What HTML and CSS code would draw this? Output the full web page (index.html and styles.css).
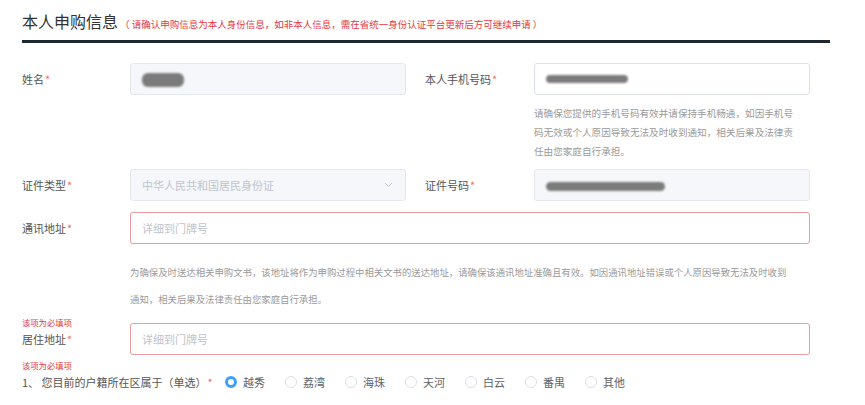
FILE: index.html
```html
<!DOCTYPE html>
<html lang="zh-CN">
<head>
<meta charset="utf-8">
<title>本人申购信息</title>
<link rel="stylesheet" href="styles.css">
</head>
<body>
<div class="page">
  <div class="head">
    <h2 class="title">本人申购信息</h2>
    <span class="note">（ 请确认申购信息为本人身份信息，如非本人信息，需在省统一身份认证平台更新后方可继续申请 ）</span>
  </div>
  <div class="rule"></div>

  <div class="row row-1">
    <div class="label">姓名<span class="star">*</span></div>
    <div class="field">
      <div class="input disabled"><span class="blob blob-name"></span></div>
    </div>
    <div class="label label-right">本人手机号码<span class="star">*</span></div>
    <div class="field">
      <div class="input"><span class="blob blob-phone"></span></div>
      <p class="help help-phone">请确保您提供的手机号码有效并请保持手机畅通，如因手机号码无效或个人原因导致无法及时收到通知，相关后果及法律责任由您家庭自行承担。</p>
    </div>
  </div>

  <div class="row row-2">
    <div class="label">证件类型<span class="star">*</span></div>
    <div class="field">
      <div class="input disabled select">
        <span class="ph">中华人民共和国居民身份证</span>
        <svg class="chev" width="9" height="6" viewBox="0 0 9 6"><path d="M1 1 L4.5 4.5 L8 1" fill="none" stroke="#c0c4cc" stroke-width="1"/></svg>
      </div>
    </div>
    <div class="label label-right">证件号码<span class="star">*</span></div>
    <div class="field">
      <div class="input disabled"><span class="blob blob-id"></span></div>
    </div>
  </div>

  <div class="row row-3">
    <div class="label">通讯地址<span class="star">*</span></div>
    <div class="field wide">
      <div class="input error"><span class="ph">详细到门牌号</span></div>
      <p class="help help-addr">为确保及时送达相关申购文书，该地址将作为申购过程中相关文书的送达地址，请确保该通讯地址准确且有效。如因通讯地址错误或个人原因导致无法及时收到通知，相关后果及法律责任由您家庭自行承担。</p>
    </div>
  </div>

  <div class="row row-4">
    <div class="label has-tip"><span class="tip">该项为必填项</span>居住地址<span class="star">*</span></div>
    <div class="field wide">
      <div class="input error"><span class="ph">详细到门牌号</span></div>
    </div>
  </div>

  <div class="question">
    <span class="tip tip-q">该项为必填项</span>
    <span class="q-text">1、 您目前的户籍所在区属于（单选）<span class="star">*</span></span>
    <div class="radios">
      <span class="radio checked"><i class="dot"></i>越秀</span>
      <span class="radio"><i class="dot"></i>荔湾</span>
      <span class="radio"><i class="dot"></i>海珠</span>
      <span class="radio"><i class="dot"></i>天河</span>
      <span class="radio"><i class="dot"></i>白云</span>
      <span class="radio"><i class="dot"></i>番禺</span>
      <span class="radio"><i class="dot"></i>其他</span>
    </div>
  </div>
</div>
</body>
</html>
```
FILE: styles.css
```css
* { box-sizing: border-box; }
html, body { margin: 0; padding: 0; background: #fff; }
body {
  font-family: "Noto Sans CJK SC", "Noto Sans", sans-serif;
  color: #555;
  font-size: 11px;
}
.page {
  width: 830px;
  padding-left: 22px;
}
.head {
  display: flex;
  align-items: baseline;
  padding-top: 9px;
  height: 39px;
}
.title {
  margin: 0;
  font-size: 16px;
  font-weight: normal;
  line-height: 24px;
  color: #333;
}
.note {
  font-size: 9.5px;
  color: #e4393c;
  margin-left: 2px;
  white-space: nowrap;
}
.rule {
  height: 3px;
  background: #1e2833;
  margin-top: 1px;
}
.row {
  display: grid;
  grid-template-columns: 108px 276px 128px 276px;
  align-items: start;
}
.row-1 { margin-top: 20px; }
.row-2 { margin-top: 8px; }
.row-3 { margin-top: 11px; }
.row-4 { margin-top: 10px; }
.label {
  height: 32px;
  line-height: 32px;
  font-size: 11px;
  color: #555;
  white-space: nowrap;
}
.label-right { padding-left: 19px; }
.star { color: #f56c6c; margin-left: 1px; }
.field.wide { grid-column: 2 / 5; }
.input {
  position: relative;
  height: 32px;
  border: 1px solid #dcdfe6;
  border-radius: 3px;
  background: #fff;
  display: flex;
  align-items: center;
  padding: 0 11px;
}
.input.disabled {
  background: #f5f7fa;
  border-color: #e4e7ed;
}
.input.error { border-color: #e89a9c; }
.ph { color: #c0c4cc; font-size: 11px; }
.select { justify-content: space-between; }
.chev { margin-right: 1px; }
.blob {
  display: block;
  background: #7b7b7b;
  border-radius: 6px;
  filter: blur(1.2px);
}
.blob-name { width: 42px; height: 14px; margin-top: 2px; }
.blob-phone { width: 82px; height: 8px; }
.blob-id { width: 119px; height: 9px; margin-top: 2px; }
.help {
  margin: 0;
  color: #9a9a9a;
  font-size: 9.6px;
}
.help-phone {
  width: 265px;
  line-height: 19px;
  margin-top: 9px;
}
.help-addr {
  width: 660px;
  font-size: 9.4px;
  line-height: 27px;
  margin-top: 15px;
}
.has-tip { position: relative; }
.tip {
  position: absolute;
  left: 0;
  font-size: 8.3px;
  line-height: 10px;
  color: #e4393c;
}
.has-tip .tip { top: -6px; }
.question {
  position: relative;
  margin-top: 17px;
  height: 20px;
  display: flex;
  align-items: center;
  font-size: 11px;
  color: #555;
}
.tip-q { top: -12px; }
.q-text { width: 203px; white-space: nowrap; }
.radios { display: flex; align-items: center; }
.radio {
  display: flex;
  align-items: center;
  width: 60px;
  color: #606266;
}
.dot {
  width: 12px;
  height: 12px;
  border: 1px solid #dcdfe6;
  border-radius: 50%;
  margin-right: 6px;
  background: #fff;
  display: inline-block;
}
.radio.checked .dot {
  border: 3.5px solid #409eff;
  background: #fff;
}
```
